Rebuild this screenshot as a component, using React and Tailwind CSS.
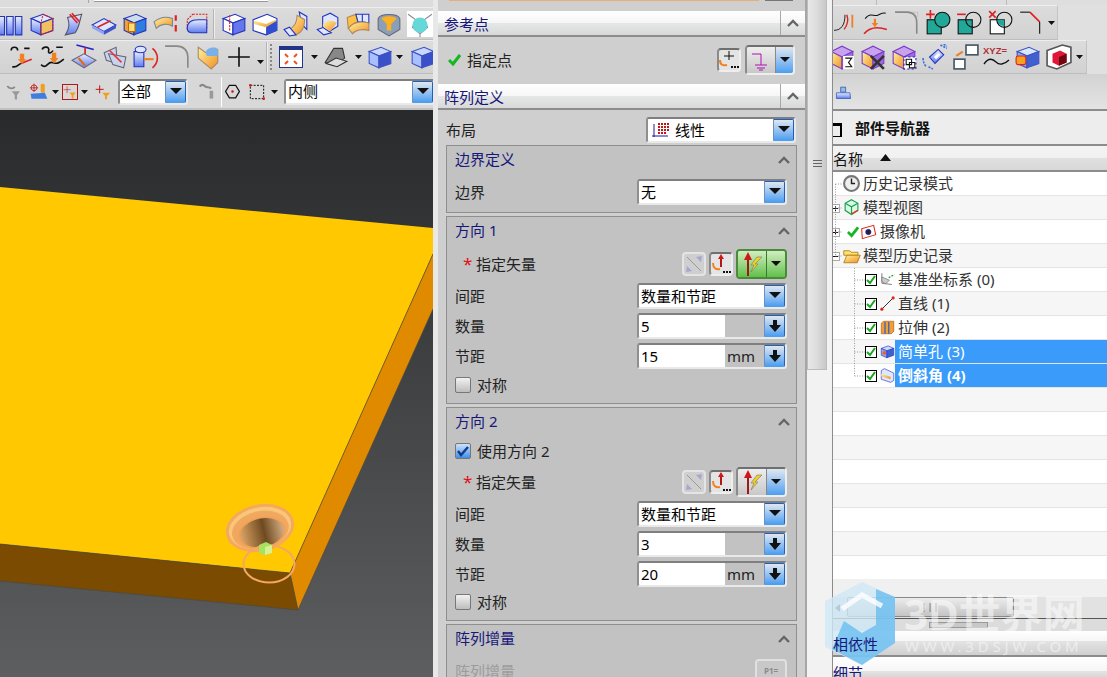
import React from "react";

const font = { fontFamily: '"Noto Sans", "Noto Sans CJK SC", sans-serif' };

// small svg wrapper for toolbar icons
const Ic = ({ s = 26, children }) => (
  <svg width={s} height={s} viewBox="0 0 24 24" className="shrink-0">
    {children}
  </svg>
);

const Box = ({ top = "#dfe6ff", left = "url(#gb)", right = "#3f55c8", stroke = "#2233bb" }) => (
  <g stroke={stroke} strokeWidth="1">
    <path d="M2 7 L13 3 L22 7 L11 11Z" fill={top} />
    <path d="M2 7 L11 11 V22 L2 18Z" fill={left} />
    <path d="M11 11 L22 7 V18 L11 22Z" fill={right} />
  </g>
);

const row1L = [
  <Ic><path d="M1 5h5v17H1zM8 5h6v17H8zM16 5h6v17h-6z" fill="url(#gb)" stroke="#2233bb" /></Ic>,
  <Ic><Box right="#f2c060" /><path d="M13 3l9 4v11l-11 4V11z" fill="none" stroke="#d22" strokeDasharray="2 1" /></Ic>,
  <Ic><path d="M5 22 C10 14 8 10 7 6 L20 3 C18 9 18 15 14 20Z" fill="url(#gb)" stroke="#556" /><path d="M9 3l7 8M11 2l7 8" stroke="#d22" strokeWidth="1.5" /></Ic>,
  <Ic><path d="M1 13 L12 7 L23 13 L12 19Z" fill="#dfe6ff" stroke="#2233bb" /><path d="M1 13 V16 L12 22 V19Z" fill="#8fa5ee" /><path d="M12 19 V22 L23 16 V13Z" fill="#3f55c8" /><path d="M6 15 L18 9" stroke="#d22" strokeWidth="1.5" /></Ic>,
  <Ic><Box left="#f4a030" right="#2f7de0" top="#cde" /><path d="M6 11h6v8H6z" fill="#ffe070" stroke="#c60" /></Ic>,
  <Ic><path d="M1 10 C7 5 13 5 18 7 V14 C13 11 7 12 3 16Z" fill="url(#go)" stroke="#789" /><path d="M21 4v5M21 13v6" stroke="#d22" strokeWidth="2" /></Ic>,
  <Ic><path d="M8 3h13v14H3V8z" fill="none" stroke="#d22" strokeDasharray="2 1" /><path d="M3 16 C3 9 8 8 13 8 H21 V20 H7 C4 20 3 19 3 16Z" fill="url(#gb)" stroke="#2233bb" /></Ic>,
];
const row1R = [
  <Ic><Box top="#fff" left="#fff" right="#6677ee" /><path d="M8 4v14" stroke="#d22" strokeDasharray="2 1" /></Ic>,
  <Ic><path d="M1 8 L14 3 L23 7 V18 L13 22 L1 18Z" fill="#fff" stroke="#2233bb" /><path d="M2 9 L13 12 L22 8 V12 L13 15 L2 12Z" fill="url(#go)" /><path d="M13 15 V22 L23 18 V9Z" fill="#2f4fd0" /></Ic>,
  <Ic><path d="M15 1 L22 5 V17 L17 12Z" fill="#dfe6ff" stroke="#2233bb" /><path d="M13 4 C13 11 10 15 6 17 L12 22 C17 20 20 15 20 8Z" fill="url(#go)" stroke="#a86" /><path d="M1 17 L6 15 L12 22 L6 23Z" fill="#dfe6ff" stroke="#2233bb" /></Ic>,
  <Ic><path d="M3 17 L9 15 L16 20 L9 22Z" fill="#dfe6ff" stroke="#2233bb" /><path d="M8 5 L15 2 L22 6 V14 L14 19 L8 15Z" fill="#dfe6ff" stroke="#2233bb" /><path d="M8 13 C11 8 16 8 21 11 L15 19 L9 15Z" fill="url(#go)" /></Ic>,
  <Ic><path d="M2 6 L10 3 L12 10 C7 11 5 14 3 16Z" fill="#ffc040" stroke="#a86" /><path d="M10 3 H22 V11 C18 10 15 10 12 10Z" fill="#dfe6ff" stroke="#2233bb" /><path d="M3 16 C7 11 14 9 22 11 V18 C16 16 9 18 7 21Z" fill="url(#go)" stroke="#a86" /><path d="M16 3v7" stroke="#2233bb" /></Ic>,
  <Ic><path d="M2 7 C4 2 20 2 22 7 V17 L12 23 L2 17Z" fill="#8aa0b8" stroke="#667" /><path d="M5 7 C8 4 16 4 19 7 L14 12 V18 H10 V12Z" fill="#ffb020" /></Ic>,
  <Ic><rect x="0" y="0" width="24" height="24" fill="#fff" /><path d="M1 3 L8 8 H16 L23 3M8 8 L5 15 L12 21 L19 15 L16 8M12 21 V24" stroke="#889" fill="none" /><circle cx="12" cy="13" r="7" fill="#66d8d8" /></Ic>,
];

const row2a = [
  <Ic><path d="M2 6c0-4 6-4 6 0M14 4h5M3 21c5 1 5-2 8-3" fill="none" stroke="#111" strokeWidth="1.5" /><path d="M11 18l10-4" stroke="#d22" strokeWidth="1.5" /><path d="M10 9v5h-2l4 4 4-4h-2V9z" fill="#f08020" /></Ic>,
  <Ic><path d="M2 5c1-3 7-3 6 1s3 2 4 0M15 3h6M1 19c5 5 6-3 10-2s5 2 11-3" fill="none" stroke="#111" strokeWidth="1.5" /><path d="M11 8v5H9l4 5 4-5h-2V8z" fill="#f08020" /></Ic>,
  <Ic><path d="M5 1l16 4" stroke="#22c" strokeWidth="1.5" /><path d="M13 3v8" stroke="#c22" strokeWidth="1.5" /><path d="M1 15 L12 9 L23 15 L12 22Z" fill="url(#gb)" stroke="#667" /><path d="M7 13l6 7" stroke="#e60" strokeWidth="2" /></Ic>,
  <Ic><path d="M2 8 L13 3 L14 18 L4 15Z" fill="#c8d4ee" stroke="#667" /><path d="M6 9 L22 12 L20 22 L10 19Z" fill="#c8d4ee" stroke="#667" /><path d="M7 6l11 11" stroke="#e33" strokeWidth="1.5" /></Ic>,
  <Ic><path d="M1 7h9v14H1z" fill="url(#gb)" stroke="#2233bb" /><ellipse cx="7" cy="5" rx="5" ry="3" fill="#dfe6ff" stroke="#2233bb" /><path d="M10 14h9" stroke="#f08020" strokeWidth="2" /><path d="M18 4c6 5 6 13 0 18" fill="none" stroke="#d22" strokeWidth="1.5" /></Ic>,
  <Ic><path d="M1 2h11c6 0 10 4 10 10v10" fill="none" stroke="#888" strokeWidth="1.5" /></Ic>,
  <Ic><path d="M3 3 L10 8 L21 5 V17 L15 23 L3 13Z" fill="url(#go)" stroke="#a86" /><path d="M10 8 C10 3 20 2 21 5 V11 H11z" fill="#7ab0ea" /></Ic>,
];

const CaretS = () => (
  <svg width="7" height="4" viewBox="0 0 7 4" className="shrink-0"><path d="M0 0h7L3.5 4z" fill="#111" /></svg>
);
const BlueCube = () => <Ic s={26}><Box top="#c8d8ff" left="#a8c0ff" right="#3a50c8" stroke="#3d52c4" /></Ic>;

const Sep = () => <div className="w-[2px] h-[30px] bg-[#eeeeee] border-l border-[#b4b4b4] shrink-0" />;
const Slot = ({ children, w = "w-[31px]" }) => <div className={`${w} flex justify-center shrink-0`}>{children}</div>;

const rightRow1 = [
  <Ic s={22}><path d="M0 20C8 20 12 14 12 3" fill="none" stroke="#111" /><path d="M14 3c2 6 1 11-3 16" fill="none" stroke="#d22" strokeWidth="1.5" /><path d="M20 3v14" stroke="#f08020" strokeWidth="2" /></Ic>,
  <Ic><path d="M2 8C6 2 10 6 13 5s5-3 8-2" fill="none" stroke="#111" /><path d="M1 22c5-6 12-7 21-4" fill="none" stroke="#d22" strokeWidth="1.5" /><path d="M10 8v4H8l3 4 3-4h-2V8z" fill="#f08020" /></Ic>,
  <Ic><path d="M1 2h11c6 0 9 4 9 10v10" fill="none" stroke="#888" strokeWidth="1.5" /><path d="M17 2h5v5" fill="none" stroke="#aaa" strokeDasharray="1 1" /></Ic>,
  <Ic><rect x="2" y="9" width="13" height="13" fill="#22a898" stroke="#111" /><circle cx="16" cy="9" r="7" fill="#22a898" stroke="#111" /><path d="M1 4h8M5 0v8" stroke="#d22" strokeWidth="1.5" /></Ic>,
  <Ic><rect x="2" y="9" width="13" height="13" fill="#22a898" stroke="#111" /><circle cx="16" cy="9" r="7" fill="none" stroke="#111" /><path d="M1 4h8" stroke="#d22" strokeWidth="1.5" /></Ic>,
  <Ic><rect x="3" y="9" width="13" height="13" fill="#fff" stroke="#111" /><path d="M9 9h7v6a7 7 0 0 1-7-6" fill="#22a898" /><circle cx="16" cy="9" r="7" fill="none" stroke="#111" /><path d="M2 1l6 6M8 1L2 7" stroke="#d22" strokeWidth="1.5" /></Ic>,
  <Ic><path d="M2 2h9" stroke="#111" /><path d="M11 2l9 9" stroke="#d22" strokeWidth="1.5" /><path d="M20 11v11" stroke="#111" /></Ic>,
];
const Purple = ({ children }) => (
  <Ic>
    <path d="M2 7 L12 2 L22 7 L12 12Z" fill="#c9a2ee" stroke="#7a3cc8" />
    <path d="M2 7 L12 12 V23 L2 18Z" fill="url(#go)" stroke="#7a3cc8" />
    <path d="M12 12 L22 7 V18 L12 23Z" fill="#9e6ae0" stroke="#7a3cc8" />
    {children}
  </Ic>
);
const rightRow2 = [
  <Purple><rect x="13" y="11" width="10" height="12" fill="#fff" /><path d="M15 13h6l-3 4 3 4h-6" fill="none" stroke="#111" /></Purple>,
  <Purple><path d="M10 11l12 12M22 11L10 23" stroke="#333" strokeWidth="2.5" /></Purple>,
  <Purple><rect x="12" y="12" width="11" height="11" fill="#fff" stroke="#22c" strokeDasharray="2 2" /><path d="M14 14h5v5h-5zM17 17h5v5h-5z" fill="none" stroke="#111" /></Purple>,
  <Ic><path d="M7 12 L15 5 L20 10 L12 18Z" fill="url(#gb)" stroke="#2233bb" /><path d="M11 12l4-4 2 2-4 4z" fill="#fff" /><path d="M1 13c0 3 1 6 3 8M6 21l4 2M17 1l6 3M20 0l3 2" fill="none" stroke="#3a70e0" strokeWidth="1.5" strokeDasharray="2 1" /></Ic>,
  <Ic><rect x="12" y="1" width="11" height="9" fill="#fff" stroke="#456" strokeWidth="1.5" /><rect x="1" y="14" width="10" height="9" fill="#fff" stroke="#456" strokeWidth="1.5" /><path d="M3 11l6-4" stroke="#f08020" strokeWidth="2" /></Ic>,
  <svg width="28" height="24" viewBox="0 0 28 24" className="shrink-0"><text x="0" y="9" fontSize="9.5" fontWeight="700" fill="#b03038" fontFamily="Liberation Sans, sans-serif">XYZ=</text><path d="M1 19c5-7 9-5 12-2s8 3 13-2" fill="none" stroke="#111" strokeWidth="1.3" /></svg>,
  <Ic><Box top="#d8e8ff" left="#8fa8f0" right="#4060d0" stroke="#3d52c4" /><rect x="1" y="11" width="9" height="8" rx="2" fill="#f8a020" stroke="#d22" /></Ic>,
  <Ic><path d="M1 6 L15 1 L23 3 V17 L10 23 L1 20Z" fill="#fff" stroke="#555" strokeWidth="1.5" /><path d="M6 9 L13 6 L19 9 V17 L12 20 L6 17Z" fill="#e01838" /><path d="M12 12 L19 9 V17 L12 20Z" fill="#700810" /></Ic>,
];

const Tb = ({ className = "", children }) => (
  <div className={`flex items-center bg-linear-to-b from-[#dcdcdc] to-[#d2d2d2] border-t border-[#eeeeee] border-b border-b-[#bdbdbd] ${className}`}>
    {children}
  </div>
);

const Arrow = ({ kind = "tri" }) => (
  <div className="w-[21px] self-stretch flex items-center justify-center shrink-0 border border-t-[#1f5fc0] border-r-[#1f5fc0] border-l-[#6a8fc0] border-b-[#4b9ef0] rounded-r-[2px] bg-linear-to-b from-[#dfe7ef] to-[#4b9ef0]">
    {kind === "tri" ? (
      <svg width="12" height="8" viewBox="0 0 12 8"><path d="M0 0h12L6 6z" fill="#111" /></svg>
    ) : (
      <svg width="12" height="12" viewBox="0 0 12 12"><path d="M4 0h4v5h4L6 12 0 5h4z" fill="#111" /></svg>
    )}
  </div>
);

const Frame = ({ className = "", children }) => (
  <div className={`flex h-[26px] rounded-[3px] border-2 border-t-[#7f7f7f] border-l-[#8f8f8f] border-b-[#e9e9e9] border-r-[#e9e9e9] overflow-hidden ${className}`}>
    {children}
  </div>
);

const Combo = ({ text, icon, className = "w-[150px]" }) => (
  <Frame className={className}>
    <div className="flex-1 bg-white flex items-center gap-[5px] pl-[2px] text-[15px] text-black">
      {icon}
      {text}
    </div>
    <Arrow />
  </Frame>
);

const Num = ({ value, unit }) => (
  <Frame className="w-[150px]">
    <div className="w-[86px] bg-white flex items-center pl-[2px] text-[15px] text-black">{value}</div>
    <div className="flex-1 bg-[#c2c2c2] flex items-center justify-end pr-[9px] text-[15px] text-[#222]">{unit}</div>
    <Arrow kind="down" />
  </Frame>
);

const Chevron = ({ color = "#666" }) => (
  <svg width="12" height="8" viewBox="0 0 12 8"><path d="M1 7l5-5 5 5" fill="none" stroke={color} strokeWidth="2.4" /></svg>
);

const Head = ({ title }) => (
  <div className="h-[26px] flex items-center bg-[linear-gradient(#ffffff_0%,#f6f6f6_50%,#e6e8e8_50%,#d8d8d8_100%)] border-b-2 border-[#8c8c8c] shrink-0">
    <div className="flex-1 pl-[6px] pt-[3px] text-[15px] text-[#17177a]">{title}</div>
    <div className="w-[25px] h-full border-l border-[#a8a8a8] flex items-center justify-center"><Chevron /></div>
  </div>
);

const Sec = ({ title, h, children }) => (
  <div className={`mx-[8px] mt-[3px] border border-[#8f8f8f] bg-[#c2c2c2] shrink-0 pl-[8px] pr-[9px] ${h}`}>
    <div className="h-[27px] flex items-center justify-between -mr-[3px] text-[15px] text-[#17177a]">
      {title}
      <Chevron />
    </div>
    {children}
  </div>
);

const Label = ({ text, children, className = "" }) => (
  <div className={`h-[26px] flex items-center justify-between text-[15px] text-[#222] ${className}`}>
    <span>{text}</span>
    {children}
  </div>
);

const Check = ({ on, text }) => (
  <div className="h-[26px] flex items-center gap-[6px] text-[15px] text-[#222]">
    <div className={`w-[16px] h-[16px] rounded-[2px] border border-[#777] flex items-center justify-center ${on ? "bg-linear-to-b from-[#cfe2f7] to-[#3d8fe6]" : "bg-linear-to-b from-[#f2f2f2] to-[#bdbdbd]"}`}>
      {on && <svg width="12" height="12" viewBox="0 0 12 12"><path d="M1 6l3 4 7-8" fill="none" stroke="#123c8c" strokeWidth="2.4" /></svg>}
    </div>
    {text}
  </div>
);

const SmallBtn = ({ children, faded }) => (
  <div className={`w-[24px] h-[24px] rounded-[4px] border-2 flex items-center justify-center ${faded ? "border-[#e4e4e4] bg-[#cfcfcf]" : "border-t-[#6f6f6f] border-l-[#8a8a8a] border-r-[#eeeeee] border-b-[#eeeeee] bg-[#e4e4e4]"}`}>
    {children}
  </div>
);

const VecIcon = () => (
  <svg width="26" height="26" viewBox="0 0 26 26"><path d="M9 7v18" stroke="#a01818" strokeWidth="2" /><path d="M9 1l4 8H5z" fill="#d01818" /><path d="M23 6L16 13H19L12 21L15 14H12L18 6Z" fill="#f4d020" stroke="#777" strokeWidth=".6" /></svg>
);

const VecSplit = ({ green }) => (
  <div className={`w-[51px] h-[30px] flex rounded-[4px] border-2 overflow-hidden ${green ? "border-[#4a8a3a]" : "border-t-[#6f6f6f] border-l-[#8a8a8a] border-r-[#eeeeee] border-b-[#eeeeee]"}`}>
    <div className={`w-[29px] flex items-center justify-center border-r ${green ? "bg-linear-to-b from-[#d0eec0] to-[#60c048] border-[#3a7a30]" : "bg-linear-to-b from-[#eeeeee] to-[#c8c8c8] border-[#888]"}`}><VecIcon /></div>
    <div className={`flex-1 flex items-center justify-center bg-linear-to-b ${green ? "from-[#d0eec0] to-[#60c048]" : "from-[#dfe7ef] to-[#4b9ef0]"}`}>
      <svg width="10" height="6" viewBox="0 0 10 6"><path d="M0 0h10L5 5z" fill="#111" /></svg>
    </div>
  </div>
);

const DirBtns = ({ green }) => (
  <div className="flex items-center gap-[3px]">
    <SmallBtn faded>
      <svg width="18" height="18" viewBox="0 0 18 18"><path d="M2 2l14 14" stroke="#999" /><path d="M17 1l-6 1 5 5zM1 17l6-1-5-5z" fill="#a6a6d0" /></svg>
    </SmallBtn>
    <SmallBtn>
      <svg width="20" height="20" viewBox="0 0 20 20"><path d="M10 3v10" stroke="#b01818" strokeWidth="2" /><path d="M10 0l3 5H7z" fill="#d01818" /><path d="M2 9c0 5 3 7 7 6" fill="none" stroke="#f08020" strokeWidth="2" /><path d="M12 17h2v2h-2zM15 17h2v2h-2zM18 17h2v2h-2z" fill="#111" /></svg>
    </SmallBtn>
    <VecSplit green={green} />
  </div>
);

const Vector = ({ green, className }) => (
  <div className={`h-[30px] flex items-center justify-between ${className}`}>
    <div className="flex items-center pl-[8px] text-[15px] text-[#222]">
      <span className="text-[#e01010] w-[12px] text-[17px] leading-[12px]">*</span>
      <span className="ml-[1px]">指定矢量</span>
    </div>
    <DirBtns green={green} />
  </div>
);

const Rows = ({ count, pitch }) => (
  <div className="flex flex-col gap-[4px] mt-[4px]">
    <Label text="间距"><Combo text="数量和节距" /></Label>
    <Label text="数量"><Num value={count} /></Label>
    <Label text="节距"><Num value={pitch} unit="mm" /></Label>
  </div>
);

const Dialog = () => (
  <div className="w-[374px] shrink-0 border-l-[5px] border-[#e8e8e8] bg-[#cfcfcf] flex flex-col border-r-2 border-r-[#a6a6a6] overflow-hidden">
    <div className="h-[11px] shrink-0 relative">
      <div className="absolute left-[11px] top-0 w-[310px] h-[1px] bg-[#e8ae78]" />
      <div className="absolute left-[327px] top-0 w-[28px] h-[1px] bg-[#777]" />
    </div>
    <Head title="参考点" />
    <div className="h-[47px] shrink-0 flex items-center pl-[10px] pr-[10px] pb-[1px] text-[15px] text-[#222]">
      <svg width="13" height="12" viewBox="0 0 13 12"><path d="M1 6l4 4 7-9" fill="none" stroke="#12b81e" strokeWidth="3" /></svg>
      <span className="ml-[6px] flex-1">指定点</span>
      <SmallBtn>
        <svg width="20" height="20" viewBox="0 0 20 20"><path d="M10 1v9M5 6h10" stroke="#111" /><path d="M1 10c0 5 3 6 7 5" fill="none" stroke="#f08020" strokeWidth="2" /><path d="M12 16h2v2h-2zM15 16h2v2h-2zM18 16h2v2h-2z" fill="#111" /></svg>
      </SmallBtn>
      <div className="w-[50px] h-[30px] ml-[4px] flex rounded-[4px] border-2 border-t-[#6f6f6f] border-l-[#8a8a8a] border-r-[#eeeeee] border-b-[#eeeeee] overflow-hidden">
        <div className="w-[29px] flex items-center justify-center bg-linear-to-b from-[#eeeeee] to-[#c8c8c8] border-r border-[#888]">
          <svg width="20" height="22" viewBox="0 0 20 22"><path d="M1 5h9v11M4 16h12M6 19h8M8 21h4" fill="none" stroke="#b010b0" /></svg>
        </div>
        <div className="flex-1 flex items-center justify-center bg-linear-to-b from-[#dfe7ef] to-[#4b9ef0]">
          <svg width="10" height="6" viewBox="0 0 10 6"><path d="M0 0h10L5 5z" fill="#111" /></svg>
        </div>
      </div>
    </div>
    <Head title="阵列定义" />
    <div className="h-[30px] shrink-0 mt-[5px] flex items-center justify-between pl-[8px] pr-[9px] text-[15px] text-[#222]">
      <span>布局</span>
      <Combo
        className="w-[150px]"
        text="线性"
        icon={
          <svg width="18" height="16" viewBox="0 0 18 16" className="ml-[2px]">
            <path d="M2 2v13M0 14h16" stroke="#1a1a9a" />
            <path d="M6 1h2v2H6zM9 1h2v2H9zM12 1h2v2h-2zM15 1h2v2h-2zM6 4h2v2H6zM9 4h2v2H9zM12 4h2v2h-2zM15 4h2v2h-2zM6 7h2v2H6zM9 7h2v2H9zM12 7h2v2h-2zM15 7h2v2h-2zM6 10h2v2H6zM9 10h2v2H9zM12 10h2v2h-2z" fill="#c01818" />
          </svg>
        }
      />
    </div>
    <Sec title="边界定义" h="h-[68px] !mt-0">
      <Label text="边界" className="mt-[6px]"><Combo text="无" /></Label>
    </Sec>
    <Sec title="方向 1" h="h-[188px]">
      <Vector green className="mt-[5px]" />
      <Rows count="5" pitch="15" />
      <div className="mt-[3px]"><Check text="对称" /></div>
    </Sec>
    <Sec title="方向 2" h="h-[214px]">
      <div className="mt-[3px]"><Check on text="使用方向 2" /></div>
      <Vector className="mt-[3px]" />
      <Rows count="3" pitch="20" />
      <div className="mt-[2px]"><Check text="对称" /></div>
    </Sec>
    <Sec title="阵列增量" h="h-[80px]">
      <div className="h-[26px] mt-[6px] flex items-center justify-between text-[15px] text-[#9c9c9c]">
        阵列增量
        <div className="w-[32px] h-[32px] mt-[8px] rounded-[4px] border-2 border-[#e0e0e0] bg-[#c8c8c8] flex items-center justify-center text-[8px] leading-[9px] text-[#8a8a8a] font-bold">P1=<br />P2=</div>
      </div>
    </Sec>
  </div>
);

const Viewport = () => (
  <div className="flex-1 relative overflow-hidden bg-linear-to-b from-[#282a2c] to-[#5c5e60]">
    <svg width="433" height="567" viewBox="0 110 433 567" className="block">
      <defs>
        <linearGradient id="hole" x1="0" x2="1" y1="0" y2="0">
          <stop offset="0" stopColor="#e0a868" />
          <stop offset=".55" stopColor="#6e4a20" />
          <stop offset="1" stopColor="#d8b088" />
        </linearGradient>
      </defs>
      <path d="M0 187 L433 228 V254 L290 573 L0 544Z" fill="#ffc800" />
      <path d="M433 254 L290 573 L298 610 L433 309Z" fill="#e08a00" />
      <path d="M0 544 L290 573 L298 610 L0 581Z" fill="#7a4b00" />
      <path d="M0 544 L290 573 L433 254M290 573 L298 610 L433 309M298 610 L0 581" fill="none" stroke="#4a4a44" strokeWidth=".7" />
      <g transform="rotate(-12 260 528)" fill="none" stroke="#f4a860">
        <ellipse cx="260" cy="528" rx="33" ry="22" strokeWidth="3" fill="#f8c878" />
        <ellipse cx="260" cy="530" rx="28" ry="18" strokeWidth="1.5" fill="#f0a860" />
        <ellipse cx="261" cy="533" rx="23" ry="15" fill="url(#hole)" stroke="#f0a050" strokeWidth="1.5" />
      </g>
      <ellipse cx="269" cy="564" rx="25.5" ry="18.5" fill="none" stroke="#f4a860" strokeWidth="2" />
      <path d="M259 545l7-3 6 3v8l-7 2-6-2z" fill="#a8e060" />
      <path d="M265 547l7-2v8l-7 2z" fill="#d8f090" />
    </svg>
  </div>
);

const treeRows = [
  { x: 10, text: "历史记录模式", icon: <Ic s={17}><circle cx="12" cy="12" r="10.5" fill="#eee" stroke="#777" strokeWidth="3" /><path d="M12 5v7h5" stroke="#222" strokeWidth="2" fill="none" /></Ic> },
  { x: 10, text: "模型视图", plus: true, icon: <Ic s={17}><path d="M12 1l9 5v10l-9 6-9-6V6z" fill="#d8f8e0" stroke="#18a058" strokeWidth="1.6" /><path d="M3 6l9 5 9-5M12 11v11" stroke="#18a058" strokeWidth="1.6" fill="none" /><path d="M12 21l9-5" stroke="#e04020" strokeWidth="2" /></Ic> },
  { x: 14, text: "摄像机", plus: true, tick: true, icon: <Ic s={16}><path d="M1 7l18-5 3 14-20 6z" fill="#fff" stroke="#d83010" strokeWidth="1.6" /><circle cx="11" cy="12" r="4" fill="#223" stroke="#22c" /></Ic> },
  { x: 10, text: "模型历史记录", plus: true, icon: <Ic s={18}><path d="M1 5h8l2 2h9v4H1z" fill="#ffe070" stroke="#a07000" /><path d="M1 21l4-10h18l-4 10z" fill="url(#go)" stroke="#a07000" /></Ic> },
  { x: 32, check: true, text: "基准坐标系 (0)", icon: <Ic s={15}><path d="M3 2v16l16 2" fill="none" stroke="#334" /><path d="M3 8l12 5-6 6-6-4z" fill="#ccc" stroke="#666" /><path d="M14 9l9-5" stroke="#18a038" strokeWidth="2" strokeDasharray="3 2" /></Ic> },
  { x: 32, check: true, text: "直线 (1)", icon: <Ic s={15}><path d="M3 21L21 3" stroke="#222" strokeWidth="1.5" /><circle cx="3" cy="21" r="2.5" fill="#d22" /><circle cx="21" cy="3" r="2.5" fill="#d22" /></Ic> },
  { x: 32, check: true, text: "拉伸 (2)", icon: <Ic s={15}><path d="M2 5l4-3h16v16l-4 4H2z" fill="#f0a030" stroke="#b05010" /><path d="M8 3v19M14 3v19" stroke="#3060d0" strokeWidth="2" /></Ic> },
  { x: 32, check: true, text: "简单孔 (3)", sel: true, icon: <Ic s={15}><Box top="#c8d8ff" left="#8fa8f0" right="#4060d0" /><circle cx="7" cy="14" r="3" fill="#f06020" /></Ic> },
  { x: 32, check: true, text: "倒斜角 (4)", sel: true, bold: true, icon: <Ic s={15}><path d="M2 4l5-3 15 7v12l-5 3L2 18z" fill="#dfe6ff" stroke="#2233bb" /><path d="M2 9l15 5v4L2 13z" fill="url(#go)" /></Ic> },
];

const Plus = ({ minus }) => (
  <svg width="9" height="9" viewBox="0 0 9 9" className="absolute left-[-2px] top-[8px]">
    <rect x=".5" y=".5" width="8" height="8" fill="#fff" stroke="#aaa" />
    <path d="M2 4.5h5" stroke="#111" />
    {!minus && <path d="M4.5 2v5" stroke="#111" />}
  </svg>
);

const TreeRow = ({ r, i }) => (
  <div className={`h-[24px] relative border-b border-[#e4e4e4] ${i % 2 ? "bg-[#f6f6f6]" : "bg-white"}`}>
    {r.plus && <Plus minus={r.text === "模型历史记录"} />}
    <div className="flex items-center h-full" style={{ paddingLeft: r.x }}>
      {r.tick && (
        <svg width="12" height="12" viewBox="0 0 13 12" className="mr-[1px] shrink-0"><path d="M1 6l4 4 7-9" fill="none" stroke="#12b81e" strokeWidth="3" /></svg>
      )}
      {r.check && (
        <div className="w-[12px] h-[12px] border border-black bg-white flex items-center justify-center shrink-0 mr-[3px]">
          <svg width="10" height="10" viewBox="0 0 10 10"><path d="M1 5l3 3 5-7" fill="none" stroke="#12a81e" strokeWidth="2" /></svg>
        </div>
      )}
      <div className={`flex justify-center shrink-0 ${r.check ? "w-[15px]" : "w-[17px]"}`}>{r.icon}</div>
      <div className={`flex-1 h-[23px] flex items-center text-[15px] ${r.check ? "pl-[3px]" : "ml-[1px] pl-[2px]"} ${r.sel ? "bg-[#3a9bfb] text-white" : "text-[#333]"} ${r.bold ? "font-bold" : ""}`}>
        {r.text}
      </div>
    </div>
  </div>
);

const RightPane = () => (
  <div className="flex-1 min-w-0 flex flex-col border-l border-[#8c8c8c] overflow-hidden">
    <div className="h-[5px] bg-[#dedede] shrink-0 flex">
      <div className="w-[44px] border-r border-[#bbb]" />
      <div className="w-[130px] border-r border-[#bbb]" />
    </div>
    <div className="h-[35px] shrink-0 bg-[#e0e0e0]">
      <Tb className="w-[225px] h-[35px] border-r border-r-[#c4c4c4]">
        <div className="-ml-[4px] flex items-center">
          {rightRow1.map((ic, i) => <Slot key={i}>{ic}</Slot>)}
        </div>
        <div className="ml-[2px]"><CaretS /></div>
      </Tb>
    </div>
    <div className="h-[34px] shrink-0 bg-[#e0e0e0]">
      <Tb className="w-[254px] h-[34px] border-r border-r-[#c4c4c4]">
        <div className="-ml-[7px] flex items-center">
          {rightRow2.map((ic, i) => <Slot key={i}>{ic}</Slot>)}
        </div>
        <div className="ml-[2px]"><CaretS /></div>
      </Tb>
    </div>
    <div className="h-[37px] shrink-0 bg-linear-to-b from-[#d2d2d2] to-[#e4e4e4] border-b-2 border-[#8c8c8c] flex items-center pl-[2px] pt-[3px]">
      <Ic s={17}><path d="M8 3h7v7H8z" fill="#9ab8e8" stroke="#2050b0" /><path d="M2 11h19l1 8H2z" fill="url(#gb)" stroke="#2050b0" /></Ic>
    </div>
    <div className="h-[35px] shrink-0 bg-[#ededed] border-b-2 border-[#8c8c8c] flex items-center text-[15px] font-bold text-[#111] pl-[22px] pt-[2px] relative">
      <div className="absolute left-0 top-[12px] w-[9px] h-[14px] border-t-[3px] border-r-2 border-b border-black" />
      部件导航器
    </div>
    <div className="h-[26px] shrink-0 bg-[linear-gradient(#f4f4f4_0%,#f0f0f0_50%,#e0e0e0_50%,#d8d8d8_100%)] border-b-2 border-[#8c8c8c] flex items-center text-[15px] text-[#111] pt-[2px] relative">
      名称
      <svg width="11" height="7" viewBox="0 0 11 7" className="absolute left-[47px] top-[8px]"><path d="M0 7L5.5 0 11 7z" fill="#111" /></svg>
    </div>
    <div className="relative h-[407px] shrink-0 bg-white overflow-hidden">
      {treeRows.map((r, i) => <TreeRow key={r.text} r={r} i={i} />)}
      {Array.from({ length: 8 }).map((_, i) => (
        <div key={i} className={`h-[24px] border-b border-[#e4e4e4] ${(i + 9) % 2 ? "bg-[#f6f6f6]" : "bg-white"}`} />
      ))}
      <svg width="40" height="220" className="absolute left-0 top-0 pointer-events-none">
        <path d="M2.5 12V84M2.5 12H10M2.5 36H10M2.5 60H10M2.5 84H10" stroke="#999" strokeDasharray="1 1.5" fill="none" />
        <path d="M21.5 96V204M21.5 108H32M21.5 132H32M21.5 156H32M21.5 180H32M21.5 204H32" stroke="#999" strokeDasharray="1 1.5" fill="none" />
      </svg>
    </div>
    <div className="h-[18px] shrink-0 bg-[#f0f0f0]" />
    <div className="h-[21px] shrink-0 bg-[#e2e2e2] flex items-center relative">
      <svg width="5" height="8" viewBox="0 0 5 8" className="ml-[2px]"><path d="M5 0v8L0 4z" fill="#555" /></svg>
      <div className="absolute left-[14px] top-0 w-[167px] h-[20px] rounded-[2px] border border-[#888] bg-linear-to-b from-[#ececec] to-[#c4c4c4] flex items-center justify-center text-[9px] text-[#555] tracking-[1px]">|||</div>
    </div>
    <div className="h-[13px] shrink-0 bg-[#dcdcdc] border-t border-[#555] flex items-start">
      <div className="ml-[96px] mt-[3px] w-[59px] h-[6px] bg-[#c8c8c8] border border-[#999]" />
    </div>
    <div className="h-[26px] shrink-0 bg-[linear-gradient(#ffffff_0%,#f6f6f6_40%,#e4e4e4_40%,#d0d0d0_100%)] border-b-2 border-[#8c8c8c] flex items-center text-[15px] text-[#17177a] pt-[3px]">
      <span className="relative z-10">相依性</span>
    </div>
    <div className="h-[20px] shrink-0 bg-[linear-gradient(#ffffff_0%,#f6f6f6_70%,#e4e4e4_70%,#d8d8d8_100%)] text-[15px] leading-[22px] text-[#17177a] pt-[5px]">
      <span className="relative z-10">细节</span>
    </div>
  </div>
);

export default function App() {
  return (
    <div className="w-[1107px] h-[677px] relative flex overflow-hidden bg-[#e0e0e0]" style={font}>
      <svg width="0" height="0" className="absolute">
        <defs>
          <linearGradient id="gb" x1="0" x2="0" y1="0" y2="1">
            <stop offset="0" stopColor="#e8eeff" />
            <stop offset="1" stopColor="#5f7cf0" />
          </linearGradient>
          <linearGradient id="go" x1="0" x2="1" y1="0" y2="1">
            <stop offset="0" stopColor="#fff2a0" />
            <stop offset="1" stopColor="#f09020" />
          </linearGradient>
        </defs>
      </svg>

      {/* left side: toolbars and graphics window */}
      <div className="w-[433px] shrink-0 flex flex-col overflow-hidden">
        <div className="h-[7px] shrink-0 bg-[#dcdcdc] flex items-start">
          <div className="ml-[88px] w-[1px] h-[3px] bg-[#aaa]" />
          <div className="ml-[5px] w-[174px] h-[2px] bg-white border-b border-[#999]" />
        </div>
        <Tb className="h-[33px] shrink-0 -ml-[5px]">
          {row1L.map((ic, i) => <Slot key={i}>{ic}</Slot>)}
          <div className="ml-[1px] mr-[3px]"><Sep /></div>
          {row1R.map((ic, i) => <Slot key={i}>{ic}</Slot>)}
        </Tb>
        <Tb className="h-[34px] shrink-0 pl-[6px]">
          {row2a.map((ic, i) => <Slot key={i}>{ic}</Slot>)}
          <Slot><Ic><path d="M12 3v18M2 12h20" stroke="#111" strokeWidth="1.5" /></Ic></Slot>
          <div className="ml-[3px] mt-[10px]"><CaretS /></div>
          <div className="ml-[2px]"><Sep /></div>
          <div className="w-[3px] h-[26px] ml-[2px] border-l-2 border-dotted border-[#888]" />
          <div className="ml-[7px] w-[24px] h-[22px] border border-[#22338a] border-t-[4px] bg-white flex items-center justify-center shrink-0">
            <svg width="14" height="12" viewBox="0 0 14 12"><path d="M1 1l3 3M13 1l-3 3M1 11l3-3M13 11l-3-3" stroke="#f05020" strokeWidth="2" /></svg>
          </div>
          <div className="ml-[8px]"><CaretS /></div>
          <div className="ml-[5px]"><Ic><path d="M2 17L10 4h8l2 9-10 7z" fill="#888" stroke="#333" /><path d="M3 18l9-5 10 3-9 5z" fill="#ddd" stroke="#333" /></Ic></div>
          <div className="ml-[6px]"><CaretS /></div>
          <div className="ml-[5px]"><BlueCube /></div>
          <div className="ml-[3px]"><CaretS /></div>
          <div className="ml-[7px]"><BlueCube /></div>
        </Tb>
        <div className="h-[36px] shrink-0 bg-[#d8d8d8] border-b-2 border-[#c0c0c0] flex items-center pl-[5px] pt-[1px]">
          <Ic s={18}><path d="M3 4c3 4 8 4 10 1" fill="none" stroke="#888" strokeWidth="2.5" /><path d="M9 11h11l-4 5v6h-3v-6z" fill="#999" /></Ic>
          <div className="ml-[6px]"><Ic s={20}><path d="M1 7h10M6 2v10" stroke="#c01818" /><circle cx="6" cy="7" r="3.5" fill="none" stroke="#c01818" /><rect x="14" y="2" width="5" height="11" rx="2" fill="#f0a020" /><path d="M2 14l17-1 3 7H3z" fill="#3f7de0" /></Ic></div>
          <div className="ml-[3px]"><CaretS /></div>
          <div className="ml-[3px] w-[16px] h-[16px] border border-[#b01818] flex items-center justify-center shrink-0">
            <Ic s={14}><path d="M1 8h12M7 2v12" stroke="#c01818" /><path d="M11 13h11l-4 5v5h-3v-5z" fill="#f0a020" /></Ic>
          </div>
          <div className="ml-[3px]"><CaretS /></div>
          <div className="ml-[7px]"><Ic s={16}><path d="M1 8h12M7 2v12" stroke="#c01818" strokeWidth="1.5" /><path d="M11 13h12l-5 5v5h-3v-5z" fill="#f0a020" /></Ic></div>
          <div className="ml-[7px]"><Frame className="w-[70px]">
            <div className="flex-1 bg-white flex items-center pl-[1px] text-[15px] text-black">全部</div>
            <Arrow />
          </Frame></div>
          <div className="ml-[11px]"><Ic s={17}><path d="M1 5c3-4 6-2 8 0s6 0 8 3" fill="none" stroke="#888" strokeWidth="3" /><path d="M15 11h5v11h-5z" fill="#999" /></Ic></div>
          <div className="ml-[5px] w-[1px] h-[30px] bg-[#aaa] border-r border-white" />
          <div className="ml-[3px]"><Ic s={15}><path d="M7 2h10l6 10-6 10H7L1 12z" fill="none" stroke="#111" strokeWidth="2" /><circle cx="12" cy="12" r="2" fill="#d01818" /></Ic></div>
          <div className="ml-[9px]"><Ic s={16}><path d="M2 2h20v20H2z" fill="none" stroke="#111" strokeWidth="1.5" strokeDasharray="3 2" /><circle cx="2" cy="2" r="2" fill="#d01818" /><circle cx="22" cy="22" r="2" fill="#d01818" /></Ic></div>
          <div className="ml-[6px]"><CaretS /></div>
          <div className="ml-[6px]"><Frame className="w-[151px] shrink-0">
            <div className="flex-1 bg-white flex items-center pl-[2px] text-[15px] text-black">内侧</div>
            <Arrow />
          </Frame></div>
        </div>
        <Viewport />
      </div>

      <Dialog />

      {/* dialog scrollbar and sash */}
      <div className="w-[25px] shrink-0 bg-[#f2f2f2] flex">
        <div className="w-[20px] h-[370px] bg-linear-to-r from-[#e8e8e8] via-[#dcdcdc] to-[#c8c8c8] border border-[#bcbcbc] border-t-0 flex flex-col items-center pt-[160px] gap-[2px]">
          <div className="w-[9px] h-[1px] bg-[#666]" />
          <div className="w-[9px] h-[1px] bg-[#666]" />
          <div className="w-[9px] h-[1px] bg-[#666]" />
        </div>
      </div>

      <RightPane />

      {/* watermark */}
      <svg width="72" height="86" viewBox="0 0 72 86" className="absolute left-[824px] top-[581px]">
        <path d="M38 1L71 16V62L38 84L1 66V20Z" fill="#cfe9f8" fillOpacity=".8" />
        <path d="M52 8L71 16V62L38 84L8 68L20 40L38 52L52 44Z" fill="#5db9ee" fillOpacity=".72" />
        <path d="M18 28L38 14L58 25" fill="none" stroke="#fff" strokeOpacity=".8" strokeWidth="5" />
      </svg>
      <div className="absolute left-[904px] top-[588px] text-[42px] leading-[52px] font-bold text-white/50 whitespace-nowrap">3D世界网</div>
      <div className="absolute left-[905px] top-[637px] text-[15px] leading-[18px] tracking-[3.8px] text-white/50 whitespace-nowrap">WWW.3DSJW.COM</div>
    </div>
  );
}
